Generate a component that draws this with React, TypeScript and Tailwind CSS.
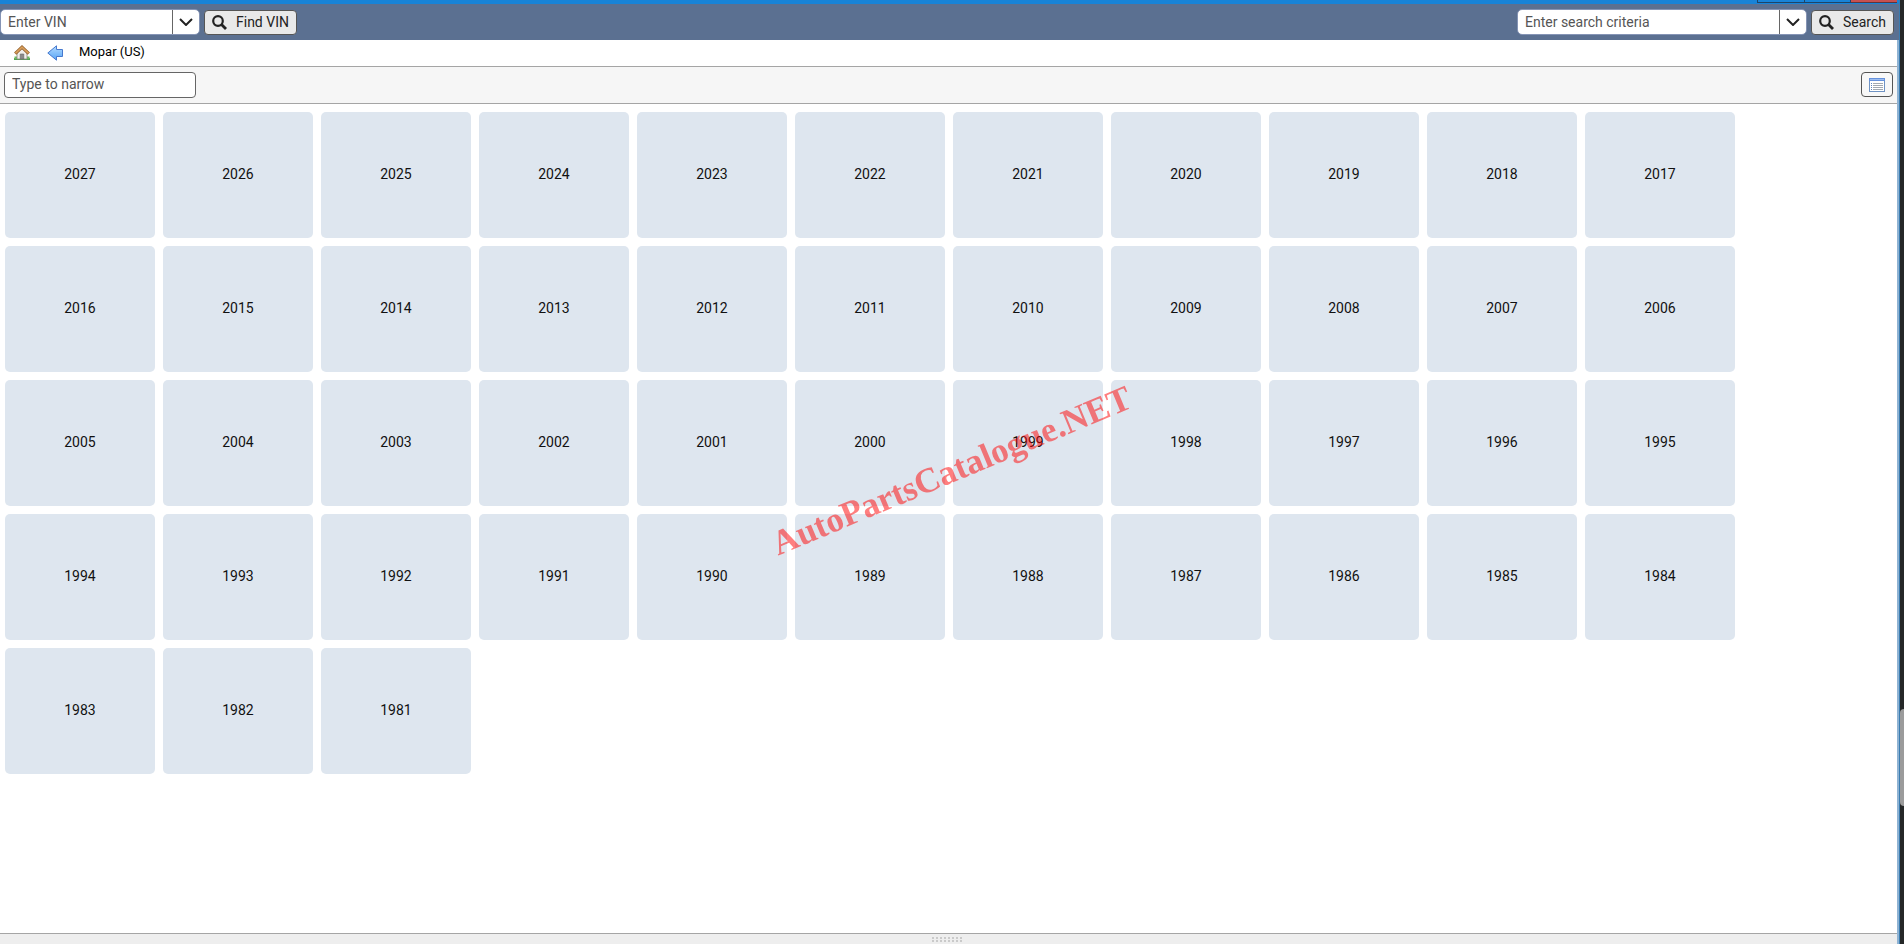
import { useState } from 'react';

const LAST_YEAR = 2027;
const FIRST_YEAR = 1981;
const years = Array.from({ length: LAST_YEAR - FIRST_YEAR + 1 }, (_, i) => LAST_YEAR - i);

function ChevronIcon() {
  return (
    <svg width="14" height="8" viewBox="0 0 14 8" fill="none" stroke="#222" strokeWidth="2">
      <path d="M1 1l6 6 6-6" />
    </svg>
  );
}

function SearchIcon() {
  return (
    <svg width="15" height="15" viewBox="0 0 15 15" fill="none" stroke="#222">
      <circle cx="6" cy="6" r="4.8" strokeWidth="2.2" />
      <path d="M9.5 9.5l4.5 4.5" strokeWidth="2.8" />
    </svg>
  );
}

function HomeIcon() {
  return (
    <svg width="16" height="16" viewBox="0 0 16 16">
      <path d="M0 13h16v2H0z" fill="#4fa052" />
      <path d="M0.5 11.5h2.5V14H0.5zM13 11.5h2.5V14H13z" fill="#6fbb62" />
      <path d="M3 8l5-5 5 5v6H3z" fill="#f1efec" stroke="#8c8880" strokeWidth="0.8" />
      <path d="M6.2 14V9h3.6v5z" fill="#8b8b8b" stroke="#666" strokeWidth="0.6" />
      <path d="M1.2 8.6L8 2.2l6.8 6.4" fill="none" stroke="#8f5b28" strokeWidth="3.2" />
      <path d="M1.4 8.3L8 2.1l6.6 6.2" fill="none" stroke="#d9a05c" strokeWidth="1.7" />
    </svg>
  );
}

function BackIcon() {
  return (
    <svg width="16" height="16" viewBox="0 0 16 16">
      <defs>
        <linearGradient id="arrow" x1="0" y1="0" x2="0" y2="1">
          <stop offset="0" stopColor="#b5dcff" />
          <stop offset="1" stopColor="#55a4f6" />
        </linearGradient>
      </defs>
      <path
        d="M0.8 8L9.5 0.8V4.5h6v7h-6v3.7z"
        fill="url(#arrow)"
        stroke="#4679cf"
        strokeLinejoin="round"
      />
    </svg>
  );
}

function ListIcon() {
  return (
    <svg width="16" height="14" viewBox="0 0 16 14" shapeRendering="crispEdges">
      <rect x="0.5" y="0.5" width="15" height="13" fill="#fff" stroke="#6f93c4" />
      <path d="M0 0h16v3H0z" fill="#6591dc" />
      <path d="M1 1h14v1H1z" fill="#9bbcf0" />
      <path d="M2 5.5h1M2 7.5h1M2 9.5h1M2 11.5h1" stroke="#5b83bd" />
      <path d="M4 5.5h10M4 7.5h10M4 9.5h10M4 11.5h10" stroke="#a2a8b0" />
    </svg>
  );
}

interface SearchBoxProps {
  id: string;
  placeholder: string;
  label: string;
  inputClass: string;
}

function SearchBox({ id, placeholder, label, inputClass }: SearchBoxProps) {
  const [value, setValue] = useState('');

  return (
    <form className="flex items-center gap-[5px]" onSubmit={(e) => e.preventDefault()}>
      <div className="flex h-6 rounded-sm bg-white outline outline-[#8594b5]">
        <input
          id={id}
          type="text"
          aria-label={placeholder}
          placeholder={placeholder}
          value={value}
          onChange={(e) => setValue(e.target.value)}
          className={`rounded-l-sm bg-white px-[7px] text-sm placeholder:text-[#555] focus:outline-none ${inputClass}`}
        />
        <button
          type="button"
          title="History"
          className="flex w-[27px] items-center justify-center rounded-r-sm border-l border-[#666] bg-white"
        >
          <ChevronIcon />
        </button>
      </div>
      <button
        type="submit"
        className="flex h-[25px] items-center gap-[9px] rounded-sm border border-[#555] bg-[#e9e9e9] px-[7px] text-sm text-[#222]"
      >
        <SearchIcon />
        {label}
      </button>
    </form>
  );
}

export default function App() {
  const [filter, setFilter] = useState('');
  const visible = years.filter((year) => String(year).includes(filter.trim()));

  return (
    <div className="flex min-h-screen bg-white font-[Roboto,sans-serif] text-black">
      <div className="flex min-w-0 flex-1 flex-col">
        {/* bottom edge of the window title bar */}
        <div className="flex h-1 justify-end bg-[#1883d7] pr-0.5">
          <div className="h-[3px] w-12 border-x border-b border-[#1d4468]" />
          <div className="h-[3px] w-[46px] border-r border-b border-[#1d4468]" />
          <div className="h-[3px] w-[46px] border-b border-[#5b3540] bg-[#c75050]" />
        </div>

        <header className="flex h-9 items-center justify-between bg-[#5b7091] pr-[5px] pl-px">
          <SearchBox id="vin" placeholder="Enter VIN" label="Find VIN" inputClass="w-[171px]" />
          <SearchBox
            id="criteria"
            placeholder="Enter search criteria"
            label="Search"
            inputClass="w-[261px]"
          />
        </header>

        <div className="flex flex-1 flex-col border-r-2 border-[#8fb3d3]">
          <nav className="flex h-[27px] items-center border-b border-[#a5a5a5] pl-3.5 text-[13px]">
            <a href="#home" title="Home">
              <HomeIcon />
            </a>
            <a href="#back" title="Back" className="ml-[17px]">
              <BackIcon />
            </a>
            <span className="ml-4 pb-0.5">Mopar (US)</span>
          </nav>

          <div className="flex h-[37px] items-center justify-between border-b border-[#a5a5a5] bg-[#f6f6f6] px-1 pb-px">
            <input
              type="text"
              aria-label="Type to narrow"
              placeholder="Type to narrow"
              value={filter}
              onChange={(e) => setFilter(e.target.value)}
              className="h-[26px] w-48 rounded-sm border border-[#666] bg-white px-[7px] pb-0.5 text-sm placeholder:text-[#555]"
            />
            <button
              type="button"
              title="List view"
              className="flex h-[25px] w-8 items-center justify-center rounded-sm border border-[#555] bg-[#f8f8f8]"
            >
              <ListIcon />
            </button>
          </div>

          <main className="flex flex-1 flex-wrap content-start gap-2 pt-2 pr-16 pb-2 pl-[5px]">
            {visible.map((year) => (
              <button
                key={year}
                type="button"
                className="h-[126px] w-[150px] rounded-[5px] bg-[#dee6ef] pb-0.5 text-sm text-[#111]"
              >
                {year}
              </button>
            ))}
          </main>

          <footer className="flex h-[11px] items-center justify-center border-t border-[#a5a5a5] bg-[#eee] pr-1">
            <svg width="30" height="5" viewBox="0 0 30 5" fill="#cacaca" shapeRendering="crispEdges">
              {[0, 4, 8, 12, 16, 20, 24, 28].map((x) => (
                <path key={x} d={`M${x} 0h2v2h-2zM${x} 3h2v2h-2z`} />
              ))}
            </svg>
          </footer>
        </div>
      </div>

      {/* window border and the scroll bar behind it */}
      <div className="flex w-[5px] flex-col border-l border-[#3a7cb0] bg-[#252728]">
        <div className="flex-[709]" />
        <div className="flex-[97] rounded-l-sm bg-[#9b9b9b]" />
        <div className="flex-[138]" />
      </div>

      <div className="pointer-events-none fixed inset-0 flex items-center justify-center pb-0.5">
        <span className="rotate-[-22.7deg] font-['Liberation_Serif',serif] text-[35px] font-bold text-[#ff0000] opacity-50">
          AutoPartsCatalogue.NET
        </span>
      </div>
    </div>
  );
}
